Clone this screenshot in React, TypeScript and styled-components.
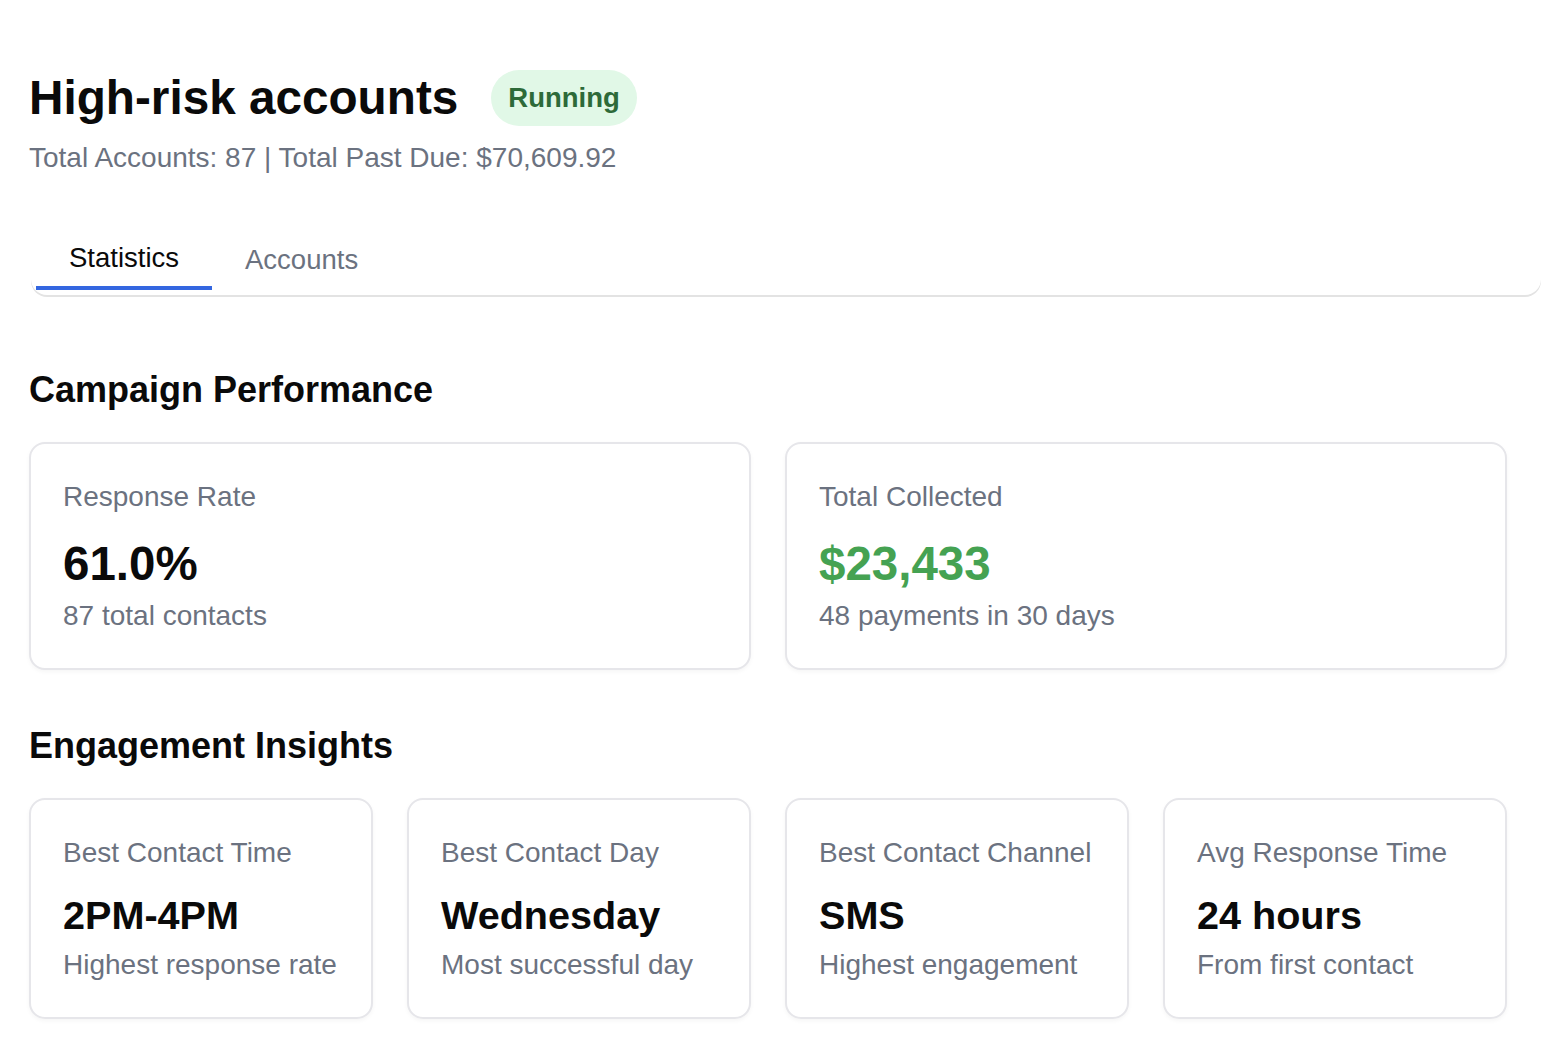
import React from "react";
import styled, { createGlobalStyle } from "styled-components";

const GlobalStyle = createGlobalStyle`
  html, body { margin: 0; padding: 0; background: #ffffff; }
  body { font-family: "Liberation Sans", Arial, Helvetica, sans-serif; color: #0a0a0a; }
  * { box-sizing: border-box; }
`;

const Page = styled.div`
  padding: 69px 21px 40px 29px;
`;

const HeaderRow = styled.div`
  display: flex;
  align-items: center;
  gap: 33px;
`;

const Title = styled.h1`
  margin: 0;
  font-size: 47.7px;
  line-height: 57.6px;
  font-weight: 700;
  color: #0a0a0a;
`;

const Badge = styled.span`
  display: inline-flex;
  align-items: center;
  height: 56px;
  padding: 0 17px;
  border-radius: 28px;
  background: #e1f8e7;
  color: #2d6a39;
  font-size: 27.5px;
  font-weight: 700;
`;

const Subtitle = styled.div`
  margin-top: 10px;
  font-size: 28px;
  line-height: 41px;
  color: #6b7280;
`;

const TabBar = styled.div`
  margin-top: 51px;
  margin-left: 2px;
  display: flex;
  padding: 0 5px 5px;
  border-radius: 0 0 16px 16px;
  box-shadow: 0 2px 0 #e3e3e3;
`;

const Tab = styled.button<{ $active?: boolean }>`
  border: none;
  background: none;
  font-family: inherit;
  font-size: 27.5px;
  line-height: 41px;
  padding: ${(p) => (p.$active ? "8px 33px 8.5px" : "10px 33px 6.5px")};
  color: ${(p) => (p.$active ? "#0a0a0a" : "#6b7280")};
  border-bottom: 4px solid ${(p) => (p.$active ? "#3366e0" : "transparent")};
  cursor: pointer;
`;

const Section = styled.section<{ $top: number }>`
  margin-top: ${(p) => p.$top}px;
  margin-right: 34px;
`;

const SectionTitle = styled.h2`
  margin: 0 0 30.5px;
  font-size: 36px;
  line-height: 43px;
  font-weight: 700;
  color: #0a0a0a;
`;

const Grid = styled.div<{ $cols: number }>`
  display: grid;
  grid-template-columns: repeat(${(p) => p.$cols}, 1fr);
  gap: 34px;
`;

const Card = styled.div`
  border: 2px solid #e6e6ea;
  border-radius: 16px;
  padding: 32px 32px 32px;
  background: #fff;
  box-shadow: 0 2px 4px rgba(0, 0, 0, 0.04);
`;

const Label = styled.div`
  font-size: 28px;
  line-height: 41px;
  color: #6b7280;
`;

const Value = styled.div<{ $size: number; $gap: number; $green?: boolean }>`
  margin-top: ${(p) => p.$gap}px;
  font-size: ${(p) => p.$size}px;
  line-height: ${(p) => p.$size * 1.2}px;
  font-weight: 700;
  color: ${(p) => (p.$green ? "#45a252" : "#0a0a0a")};
`;

const Sub = styled.div<{ $gap: number }>`
  margin-top: ${(p) => p.$gap}px;
  font-size: 28px;
  line-height: 41px;
  color: #6b7280;
`;

const campaign = [
  { label: "Response Rate", value: "61.0%", sub: "87 total contacts" },
  { label: "Total Collected", value: "$23,433", sub: "48 payments in 30 days", green: true },
];

const insights = [
  { label: "Best Contact Time", value: "2PM-4PM", sub: "Highest response rate" },
  { label: "Best Contact Day", value: "Wednesday", sub: "Most successful day" },
  { label: "Best Contact Channel", value: "SMS", sub: "Highest engagement" },
  { label: "Avg Response Time", value: "24 hours", sub: "From first contact" },
];

export default function App() {
  return (
    <>
      <GlobalStyle />
      <Page>
        <HeaderRow>
          <Title>High-risk accounts</Title>
          <Badge>Running</Badge>
        </HeaderRow>
        <Subtitle>Total Accounts: 87 | Total Past Due: $70,609.92</Subtitle>
        <TabBar>
          <Tab $active>Statistics</Tab>
          <Tab>Accounts</Tab>
        </TabBar>
        <Section $top={73}>
          <SectionTitle>Campaign Performance</SectionTitle>
          <Grid $cols={2}>
            {campaign.map((c) => (
              <Card key={c.label}>
                <Label>{c.label}</Label>
                <Value $size={47.5} $gap={18} $green={c.green}>{c.value}</Value>
                <Sub $gap={3}>{c.sub}</Sub>
              </Card>
            ))}
          </Grid>
        </Section>
        <Section $top={54.5}>
          <SectionTitle>Engagement Insights</SectionTitle>
          <Grid $cols={4}>
            {insights.map((c) => (
              <Card key={c.label}>
                <Label>{c.label}</Label>
                <Value $size={39.6} $gap={19}>{c.value}</Value>
                <Sub $gap={5}>{c.sub}</Sub>
              </Card>
            ))}
          </Grid>
        </Section>
      </Page>
    </>
  );
}
